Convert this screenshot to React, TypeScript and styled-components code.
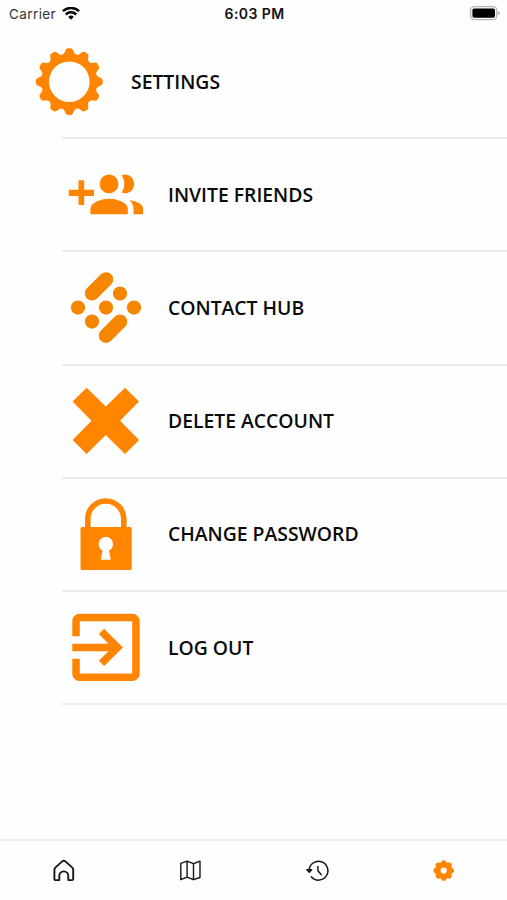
import React from "react";
import styled, { createGlobalStyle } from "styled-components";

const ORANGE = "#ff8400";

const GlobalStyle = createGlobalStyle`
  body { margin: 0; background: #fefefe; }
  * { box-sizing: border-box; }
`;

const Screen = styled.div`
  display: flex;
  flex-direction: column;
  width: 507px;
  height: 900px;
  overflow: hidden;
  background: #fefefe;
  color: #0b0b0b;
  font-family: "Open Sans", sans-serif;
`;

const StatusBar = styled.header`
  display: grid;
  grid-template-columns: 1fr auto 1fr;
  align-items: center;
  height: 26px;
  padding: 1px 7px 0 9px;
  font-family: Inter, sans-serif;
  font-size: 13.5px;
  line-height: 24px;
`;

const Carrier = styled.div`
  display: flex;
  align-items: center;
  gap: 6px;
  color: #333;
  letter-spacing: 0.4px;
`;

const Clock = styled.div`
  font-size: 14px;
  font-weight: 600;
  letter-spacing: 0.42px;
  color: #111;
`;

const Battery = styled.div`
  display: flex;
  justify-content: flex-end;
`;

const Menu = styled.main`
  flex: 1;
`;

const Row = styled.div<{ $heading?: boolean }>`
  display: flex;
  align-items: center;
  gap: 24px;
  height: 111.2px;
  padding-left: ${(p) => (p.$heading ? 31 : 68)}px;
`;

const Divider = styled.hr`
  height: 2px;
  margin: 0 0 0 62px;
  border: 0;
  background: #ebebeb;
`;

const Label = styled.span`
  font-size: 19.35px;
  font-weight: 600;
  line-height: 26px;
  white-space: nowrap;
`;

const RowIcon = styled.svg`
  flex: none;
  width: 76px;
  height: 76px;
  fill: ${ORANGE};
`;

const TabBar = styled.nav`
  display: grid;
  grid-template-columns: repeat(4, 1fr);
  height: 61px;
  border-top: 2px solid #ebebeb;
`;

const Tab = styled.div`
  display: flex;
  justify-content: center;
  padding-top: 17px;
`;

const TabIcon = styled.svg`
  width: 26px;
  height: 26px;
  fill: none;
  stroke: #161616;
  stroke-linecap: round;
  stroke-linejoin: round;
`;

/* Polar tooth profile: [radius, angle in degrees from the tooth's axis]. */
function gearPath(cx: number, cy: number, teeth: number, profile: number[][]) {
  const step = 360 / teeth;
  const pts: string[] = [];
  for (let i = 0; i < teeth; i++) {
    for (const [r, a] of profile) {
      const t = ((i * step + a - 90) * Math.PI) / 180;
      pts.push(`${(cx + r * Math.cos(t)).toFixed(2)} ${(cy + r * Math.sin(t)).toFixed(2)}`);
    }
  }
  return `M${pts.join("L")}Z`;
}

const ring = (cx: number, cy: number, r: number) =>
  `M${cx - r} ${cy}a${r} ${r} 0 1 0 ${2 * r} 0a${r} ${r} 0 1 0 ${-2 * r} 0Z`;

const bigGear =
  gearPath(38.3, 37.7, 12, [
    [28, -14], [28.6, -11], [30.2, -8.5], [32, -6.6], [33, -4.8], [33.4, -2.5],
    [33.4, 2.5], [33, 4.8], [32, 6.6], [30.2, 8.5], [28.6, 11], [28, 14],
  ]) + ring(38.3, 37.7, 20.3);

const smallGear =
  gearPath(12.7, 12.6, 8, [
    [8.5, -21], [9.2, -15], [10, -10], [10.3, -4],
    [10.3, 4], [10, 10], [9.2, 15], [8.5, 21],
  ]) + ring(12.7, 12.6, 3.1);

const SettingsIcon = () => (
  <RowIcon viewBox="0 0 76 76"><path fillRule="evenodd" d={bigGear} /></RowIcon>
);

const InviteIcon = () => (
  <RowIcon viewBox="0 0 76 76">
    <path d="M.8 32.8h9.7v-9.5h5.7v9.5H26v6.1h-9.8V48h-5.7v-9.1H.8z" />
    <circle cx="41" cy="26.9" r="9.4" />
    <path d="M53.6 18.2C60 15.8 66.1 20.5 66.1 27S60 38.2 53.6 35.6C57.2 30.2 57.2 23.4 53.6 18.2Z" />
    <path d="M22.4 57.2V52C22.4 45 34 41.8 41 41.8S59.8 45 59.8 52v5.2Z" />
    <path d="M61.6 43.2C69.5 44 75.1 47.3 75.1 52v5.2h-9.6V52c0-3.5-1.3-6.4-3.9-8.8Z" />
  </RowIcon>
);

const HubIcon = () => (
  <RowIcon viewBox="0 0 76 76">
    <g fill="#f48600">
      <circle cx="10" cy="37.6" r="7.1" />
      <circle cx="38" cy="37.6" r="7.1" />
      <circle cx="66" cy="37.6" r="7.1" />
      <circle cx="52" cy="23.6" r="7.1" />
      <circle cx="24" cy="51.6" r="7.1" />
    </g>
    <path d="M24 23.4 38 9.4M38 65.7l14-14" stroke="#f48600" strokeWidth="14.4" strokeLinecap="round" />
  </RowIcon>
);

const DeleteIcon = () => (
  <RowIcon viewBox="0 0 76 76">
    <path d="M18.6 4.7 37.8 23.6 57 4.7 71 18.6 52.1 37.7 71 57 57 71 37.8 52 18.6 71 4.6 57 23.5 37.7 4.6 18.6Z" />
  </RowIcon>
);

const LockIcon = () => (
  <RowIcon viewBox="0 0 76 76">
    <path d="M19.8 33V23a18 18 0 0 1 36 0v10" fill="none" stroke={ORANGE} strokeWidth="5.6" />
    <path
      fillRule="evenodd"
      d="M14 31h48.2a1.5 1.5 0 0 1 1.5 1.5v40a1.5 1.5 0 0 1-1.5 1.5H14a1.5 1.5 0 0 1-1.5-1.5v-40A1.5 1.5 0 0 1 14 31ZM34.6 54.6l-1.8 9.2h10l-1.8-9.2a7.3 7.3 0 1 0-6.4 0Z"
    />
  </RowIcon>
);

const LogOutIcon = () => (
  <RowIcon viewBox="0 0 76 76">
    <path
      transform="translate(-6.93 -7.53) scale(3.744)"
      d="M10.09 15.59 11.5 17l5-5-5-5-1.41 1.41L12.67 11H3v2h9.67l-2.58 2.59ZM19 3H5c-1.11 0-2 .9-2 2v4h2V5h14v14H5v-4H3v4c0 1.1.89 2 2 2h14c1.1 0 2-.9 2-2V5c0-1.1-.9-2-2-2Z"
    />
  </RowIcon>
);

const WifiIcon = () => (
  <svg width="18" height="14" viewBox="0 0 18 14" fill="none" stroke="#0a0a0a" strokeWidth="2.5">
    <path d="M.9 4.2a11.6 11.6 0 0 1 16.2 0M3.8 7.5a7.4 7.4 0 0 1 10.4 0" />
    <path d="M9 12.8 6.2 9.9a4 4 0 0 1 5.6 0Z" fill="#0a0a0a" stroke="none" />
  </svg>
);

const BatteryIcon = () => (
  <svg width="31" height="15" viewBox="0 0 31 15">
    <rect x="1.6" y=".6" width="26.2" height="13" rx="3.8" fill="#fff" stroke="#b7b7b7" strokeWidth="1.4" />
    <rect x="3.4" y="2.5" width="22.6" height="9.2" rx="1.8" fill="#000" />
    <path d="M29 4.9q2 .8 2 2.2t-2 2.2Z" fill="#b7b7b7" />
  </svg>
);

const items = [
  { label: "SETTINGS", Icon: SettingsIcon, heading: true },
  { label: "INVITE FRIENDS", Icon: InviteIcon },
  { label: "CONTACT HUB", Icon: HubIcon },
  { label: "DELETE ACCOUNT", Icon: DeleteIcon },
  { label: "CHANGE PASSWORD", Icon: LockIcon },
  { label: "LOG OUT", Icon: LogOutIcon },
];

export default function App() {
  return (
    <Screen>
      <GlobalStyle />
      <StatusBar>
        <Carrier>Carrier <WifiIcon /></Carrier>
        <Clock>6:03 PM</Clock>
        <Battery><BatteryIcon /></Battery>
      </StatusBar>
      <Menu>
        {items.map(({ label, Icon, heading }) => (
          <React.Fragment key={label}>
            <Row $heading={heading}>
              <Icon />
              <Label>{label}</Label>
            </Row>
            <Divider />
          </React.Fragment>
        ))}
      </Menu>
      <TabBar>
        <Tab>
          <TabIcon viewBox="-0.8 0.5 26 26" strokeWidth="1.9">
            <path d="M3.6 12.2c0-.9.3-1.5.9-2.1l6.9-6.2c1-.9 2.2-.9 3.2 0l6.9 6.2c.6.6.9 1.2.9 2.1v9.2c0 .8-.4 1.2-1.2 1.2h-3.7v-4.2a4.5 4.5 0 0 0-9 0v4.2H4.8c-.8 0-1.2-.4-1.2-1.2Z" />
          </TabIcon>
        </Tab>
        <Tab>
          <TabIcon viewBox="-0.4 0.6 26 26" strokeWidth="1.4">
            <path d="M3.4 6 9.7 3.8l6.4 2.5 6.5-2.5v16.3l-6.5 2.2-6.4-2.5-6.3 2.5ZM9.7 3.8v16M16.1 6.3v16" />
          </TabIcon>
        </Tab>
        <Tab>
          <TabIcon viewBox="-0.5 0.6 26 26" strokeWidth="1.5">
            <path d="M4.6 12.9a9.4 9.4 0 1 1 2.3 6.6M13.4 9.2v4.2l3.2 3.8" />
            <path d="M2.4 12.4h4.7l-2.3 2.5Z" fill="#161616" />
          </TabIcon>
        </Tab>
        <Tab>
          <TabIcon viewBox="0 0 26 26">
            <path d={smallGear} fill={ORANGE} stroke="none" fillRule="evenodd" />
          </TabIcon>
        </Tab>
      </TabBar>
    </Screen>
  );
}
